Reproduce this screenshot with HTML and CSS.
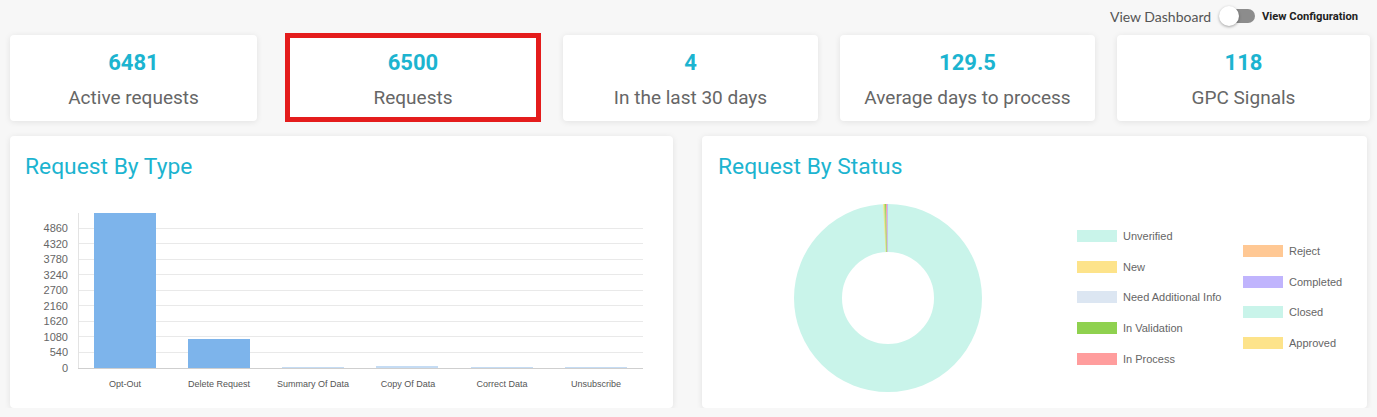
FILE: index.html
```html
<!DOCTYPE html>
<html lang="en">
<head>
    <meta charset="UTF-8">
    <meta name="viewport" content="width=device-width, initial-scale=1.0">
    <title>Privacy Requests - Dashboard</title>
    <link rel="stylesheet" href="styles.css">
</head>
<body>
    <div class="topbar">
        <span class="view-label">View Dashboard</span>
        <span class="switch"><span class="knob"></span></span>
        <span class="view-active">View Configuration</span>
    </div>

    <div class="stats">
        <div class="stat-card">
            <div class="stat-value">6481</div>
            <div class="stat-label">Active requests</div>
        </div>
        <div class="stat-card selected">
            <div class="stat-value">6500</div>
            <div class="stat-label">Requests</div>
        </div>
        <div class="stat-card">
            <div class="stat-value">4</div>
            <div class="stat-label">In the last 30 days</div>
        </div>
        <div class="stat-card">
            <div class="stat-value">129.5</div>
            <div class="stat-label">Average days to process</div>
        </div>
        <div class="stat-card">
            <div class="stat-value">118</div>
            <div class="stat-label">GPC Signals</div>
        </div>
    </div>

    <div class="charts">
        <div class="panel">
            <h2>Request By Type</h2>
            <svg class="bar-chart" width="663" height="205" viewBox="0 0 663 205">
                <!-- grid -->
                <g stroke="#e9e9e9" stroke-width="1">
                    <line x1="68" y1="156.5" x2="633" y2="156.5"/>
                    <line x1="68" y1="140.5" x2="633" y2="140.5"/>
                    <line x1="68" y1="125.5" x2="633" y2="125.5"/>
                    <line x1="68" y1="109.5" x2="633" y2="109.5"/>
                    <line x1="68" y1="94.5" x2="633" y2="94.5"/>
                    <line x1="68" y1="78.5" x2="633" y2="78.5"/>
                    <line x1="68" y1="63.5" x2="633" y2="63.5"/>
                    <line x1="68" y1="47.5" x2="633" y2="47.5"/>
                    <line x1="68" y1="32.5" x2="633" y2="32.5"/>
                </g>
                <line x1="68.5" y1="17" x2="68.5" y2="172" stroke="#e3e3e3"/>
                <line x1="68" y1="172.5" x2="633" y2="172.5" stroke="#cfcfcf"/>

                <!-- y axis -->
                <g class="tick" text-anchor="end">
                    <text x="58" y="176">0</text>
                    <text x="58" y="160">540</text>
                    <text x="58" y="145">1080</text>
                    <text x="58" y="129">1620</text>
                    <text x="58" y="114">2160</text>
                    <text x="58" y="98">2700</text>
                    <text x="58" y="83">3240</text>
                    <text x="58" y="67">3780</text>
                    <text x="58" y="52">4320</text>
                    <text x="58" y="36">4860</text>
                </g>

                <!-- bars -->
                <g fill="#7db4eb">
                    <rect x="84" y="17" width="62" height="155"/>
                    <rect x="178" y="143" width="62" height="29"/>
                </g>
                <g fill="#c5dcf4">
                    <rect x="272" y="171" width="62" height="1"/>
                    <rect x="366" y="170" width="62" height="2"/>
                    <rect x="461" y="171" width="62" height="1"/>
                    <rect x="555" y="171" width="62" height="1"/>
                </g>

                <!-- categories -->
                <g class="category" text-anchor="middle">
                    <text x="115" y="191">Opt-Out</text>
                    <text x="209" y="191">Delete Request</text>
                    <text x="303" y="191">Summary Of Data</text>
                    <text x="398" y="191">Copy Of Data</text>
                    <text x="492" y="191">Correct Data</text>
                    <text x="586" y="191">Unsubscribe</text>
                </g>
            </svg>
        </div>

        <div class="panel">
            <h2>Request By Status</h2>
            <div class="status-body">
                <svg class="donut" width="188" height="188" viewBox="0 0 188 188">
                    <circle cx="94" cy="94" r="70" fill="none" stroke="#c9f4ea" stroke-width="48"/>
                    <path fill="#fde38a" d="M89.08 0.13A94 94 0 0 1 90.06 0.08L92.07 48.04A46 46 0 0 0 91.59 48.06Z"/>
                    <path fill="#c8dc6a" d="M90.06 0.08A94 94 0 0 1 91.05 0.05L92.56 48.02A46 46 0 0 0 92.07 48.04Z"/>
                    <path fill="#8fd14f" d="M91.05 0.05A94 94 0 0 1 92.03 0.02L93.04 48.01A46 46 0 0 0 92.56 48.02Z"/>
                    <path fill="#ff9d9d" d="M92.03 0.02A94 94 0 0 1 93.02 0.01L93.52 48A46 46 0 0 0 93.04 48.01Z"/>
                    <path fill="#c0b4fd" d="M93.02 0.01A94 94 0 0 1 94 0L94 48A46 46 0 0 0 93.52 48Z"/>
                </svg>
                <div class="legend">
                    <div class="legend-col">
                        <div class="legend-item"><span class="swatch unverified"></span>Unverified</div>
                        <div class="legend-item"><span class="swatch new"></span>New</div>
                        <div class="legend-item"><span class="swatch info"></span>Need Additional Info</div>
                        <div class="legend-item"><span class="swatch validation"></span>In Validation</div>
                        <div class="legend-item"><span class="swatch process"></span>In Process</div>
                    </div>
                    <div class="legend-col second">
                        <div class="legend-item"><span class="swatch reject"></span>Reject</div>
                        <div class="legend-item"><span class="swatch completed"></span>Completed</div>
                        <div class="legend-item"><span class="swatch closed"></span>Closed</div>
                        <div class="legend-item"><span class="swatch approved"></span>Approved</div>
                    </div>
                </div>
            </div>
        </div>
    </div>
</body>
</html>
```

FILE: styles.css
```css
body {
    margin: 0;
    background: #f7f7f7;
    font-family: Roboto, 'Liberation Sans', sans-serif;
    color: #666;
}

/* top switch */
.topbar {
    height: 35px;
    display: flex;
    align-items: center;
    justify-content: flex-end;
    padding-right: 19px;
    box-sizing: border-box;
    padding-bottom: 3px;
}
.view-label {
    font-family: Lato, sans-serif;
    font-size: 14px;
    color: #555;
    margin-right: 12px;
}
.switch {
    position: relative;
    width: 32px;
    height: 14px;
    border-radius: 7px;
    background: #8c8c8c;
    margin-right: 7px;
}
.knob {
    position: absolute;
    left: -4px;
    top: -3px;
    width: 20px;
    height: 20px;
    border-radius: 50%;
    background: #fff;
    box-shadow: 0 1px 3px rgba(0, 0, 0, 0.35);
}
.view-active {
    font-size: 11.2px;
    font-weight: 700;
    color: #222;
}

/* stat cards */
.stats {
    display: grid;
    grid-template-columns: 253px 256px 255px 255px 253px;
    column-gap: 22px;
    align-items: start;
    padding-left: 10px;
}
.stat-card {
    background: #fff;
    border-radius: 4px;
    box-shadow: 0 1px 6px rgba(0, 0, 0, 0.09);
    height: 86px;
    box-sizing: border-box;
    padding: 15px 4px 0;
    text-align: center;
}
.stat-card:first-child {
    width: 247px;
}
.stat-card.selected {
    height: 89px;
    margin-top: -2px;
    border: 5px solid #e41c1c;
    border-radius: 0;
    padding-top: 12px;
    box-shadow: none;
}
.stat-value {
    font-size: 22px;
    line-height: 26px;
    font-weight: 700;
    color: #1cb4d0;
}
.stat-label {
    margin-top: 11px;
    font-size: 19px;
    line-height: 22px;
    color: #666;
}

/* chart panels */
.charts {
    display: grid;
    grid-template-columns: 663px 665px;
    column-gap: 29px;
    padding-left: 10px;
    margin-top: 14px;
}
.panel {
    background: #fff;
    border-radius: 4px;
    box-shadow: 0 1px 6px rgba(0, 0, 0, 0.09);
    height: 272px;
    box-sizing: border-box;
    padding-top: 18px;
}
.panel h2 {
    margin: 0 0 16px 15px;
    font-size: 22.8px;
    line-height: 26px;
    font-weight: 400;
    color: #1cb4d0;
}
.panel:last-child h2 {
    margin-left: 16px;
}
.bar-chart {
    display: block;
}
.tick text {
    font-family: 'Liberation Sans', Arial, sans-serif;
    font-size: 11px;
    fill: #666;
}
.category text {
    font-family: 'Liberation Sans', Arial, sans-serif;
    font-size: 9px;
    fill: #555;
}

/* status donut + legend */
.status-body {
    display: flex;
    align-items: flex-start;
}
.donut {
    display: block;
    flex: none;
    margin: 8px 0 0 92px;
}
.legend {
    display: flex;
    margin: 34px 0 0 95px;
    font-family: 'Liberation Sans', Arial, sans-serif;
    font-size: 11px;
    color: #666;
}
.legend-col {
    display: flex;
    flex-direction: column;
    gap: 18.7px;
    width: 166px;
}
.legend-col.second {
    margin-top: 15px;
}
.legend-item {
    display: flex;
    align-items: center;
    height: 12px;
    gap: 6px;
    white-space: nowrap;
}
.swatch {
    width: 40px;
    height: 12px;
    flex: none;
}
.unverified, .closed { background: #c9f4ea; }
.new, .approved { background: #fde38a; }
.info { background: #dce6f2; }
.validation { background: #8fd14f; }
.process { background: #ff9d9d; }
.reject { background: #ffc894; }
.completed { background: #c0b4fd; }
```
